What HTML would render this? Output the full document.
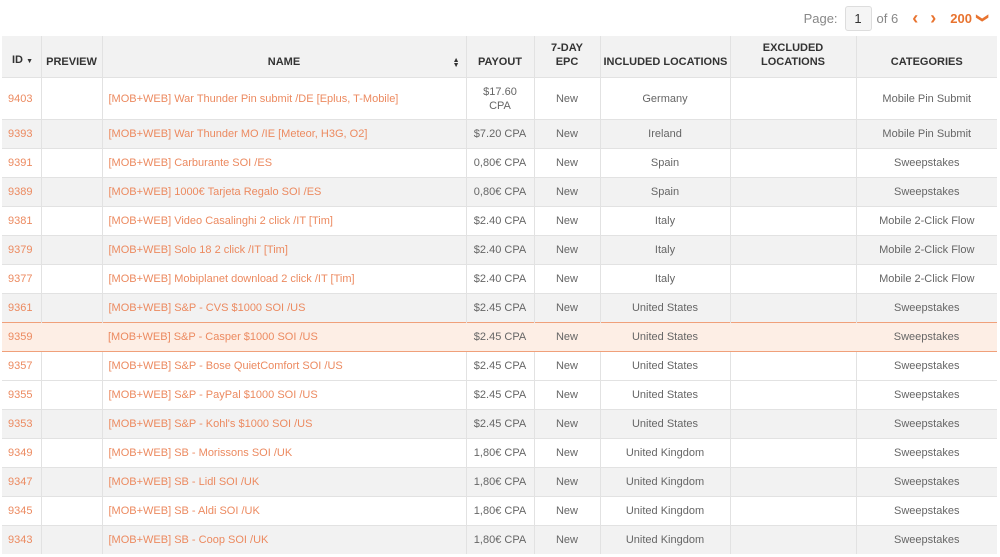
<!DOCTYPE html>
<html><head><meta charset="utf-8"><style>
body{margin:0;background:#fff;font-family:"Liberation Sans",sans-serif;width:1000px;height:557px;overflow:hidden;position:relative}
.top{position:absolute;top:6px;right:12px;height:24px;font-size:13px;color:#888;display:flex;align-items:center}
.pg{display:inline-block;width:27px;height:25px;border:1px solid #ddd;border-radius:3px;background:#f5f5f5;color:#333;text-align:center;line-height:24px;margin:0 5px 0 7px;box-sizing:border-box}
.or{color:#e8732f;font-weight:bold}
table{position:absolute;left:2px;top:36px;border-collapse:collapse;table-layout:fixed;width:995px}
th{background:#f2f2f2;height:33px;font-size:11px;color:#333;font-weight:bold;border-left:1px solid #e2e2e2;text-align:center;vertical-align:bottom;padding:0 3px 8px;line-height:14px;white-space:nowrap}
td{height:28px;font-size:11px;color:#666;border-left:1px solid #e2e2e2;border-top:1px solid #e2e2e2;text-align:center;padding:0 6px;white-space:nowrap;overflow:hidden}
th:first-child,td:first-child{border-left:none}
td.l{text-align:left;color:#ec8a60}
tr.g td{background:#f2f2f2}
tr.h td{background:#fdeee5;border-top:1px solid #f0a07a;border-bottom:1px solid #f0a07a;border-left:none}
tr.first td{height:41px;line-height:14px}
</style></head><body>
<div class="top">Page:<span class="pg">1</span>of 6 <span class="or" style="margin-left:14px;font-size:18px">&#8249;</span><span class="or" style="margin-left:12px;font-size:18px">&#8250;</span><span class="or" style="margin-left:14px">200</span><span class="or" style="margin-left:6px;display:inline-block;transform:rotate(90deg);font-size:12px">&#10095;</span></div>
<table>
<colgroup><col style="width:39px"><col style="width:61px"><col style="width:364px"><col style="width:68px"><col style="width:66px"><col style="width:130px"><col style="width:126px"><col style="width:141px"></colgroup>
<tr><th style="text-align:left;padding-left:10px">ID <span style="font-size:7px">&#9660;</span></th><th>PREVIEW</th><th style="position:relative">NAME<span style="position:absolute;right:6px;bottom:9px;font-size:7px;line-height:5px">&#9650;<br>&#9660;</span></th><th>PAYOUT</th><th>7-DAY<br>EPC</th><th>INCLUDED LOCATIONS</th><th>EXCLUDED<br>LOCATIONS</th><th>CATEGORIES</th></tr>
<tr class="first"><td class="l">9403</td><td></td><td class="l">[MOB+WEB] War Thunder Pin submit /DE [Eplus, T-Mobile]</td><td>$17.60<br>CPA</td><td>New</td><td>Germany</td><td></td><td>Mobile Pin Submit</td></tr>
<tr class="g"><td class="l">9393</td><td></td><td class="l">[MOB+WEB] War Thunder MO /IE [Meteor, H3G, O2]</td><td>$7.20 CPA</td><td>New</td><td>Ireland</td><td></td><td>Mobile Pin Submit</td></tr>
<tr><td class="l">9391</td><td></td><td class="l">[MOB+WEB] Carburante SOI /ES</td><td>0,80€ CPA</td><td>New</td><td>Spain</td><td></td><td>Sweepstakes</td></tr>
<tr class="g"><td class="l">9389</td><td></td><td class="l">[MOB+WEB] 1000€ Tarjeta Regalo SOI /ES</td><td>0,80€ CPA</td><td>New</td><td>Spain</td><td></td><td>Sweepstakes</td></tr>
<tr><td class="l">9381</td><td></td><td class="l">[MOB+WEB] Video Casalinghi 2 click /IT [Tim]</td><td>$2.40 CPA</td><td>New</td><td>Italy</td><td></td><td>Mobile 2-Click Flow</td></tr>
<tr class="g"><td class="l">9379</td><td></td><td class="l">[MOB+WEB] Solo 18 2 click /IT [Tim]</td><td>$2.40 CPA</td><td>New</td><td>Italy</td><td></td><td>Mobile 2-Click Flow</td></tr>
<tr><td class="l">9377</td><td></td><td class="l">[MOB+WEB] Mobiplanet download 2 click /IT [Tim]</td><td>$2.40 CPA</td><td>New</td><td>Italy</td><td></td><td>Mobile 2-Click Flow</td></tr>
<tr class="g"><td class="l">9361</td><td></td><td class="l">[MOB+WEB] S&amp;P - CVS $1000 SOI /US</td><td>$2.45 CPA</td><td>New</td><td>United States</td><td></td><td>Sweepstakes</td></tr>
<tr class="h"><td class="l">9359</td><td></td><td class="l">[MOB+WEB] S&amp;P - Casper $1000 SOI /US</td><td>$2.45 CPA</td><td>New</td><td>United States</td><td></td><td>Sweepstakes</td></tr>
<tr><td class="l">9357</td><td></td><td class="l">[MOB+WEB] S&amp;P - Bose QuietComfort SOI /US</td><td>$2.45 CPA</td><td>New</td><td>United States</td><td></td><td>Sweepstakes</td></tr>
<tr><td class="l">9355</td><td></td><td class="l">[MOB+WEB] S&amp;P - PayPal $1000 SOI /US</td><td>$2.45 CPA</td><td>New</td><td>United States</td><td></td><td>Sweepstakes</td></tr>
<tr class="g"><td class="l">9353</td><td></td><td class="l">[MOB+WEB] S&amp;P - Kohl's $1000 SOI /US</td><td>$2.45 CPA</td><td>New</td><td>United States</td><td></td><td>Sweepstakes</td></tr>
<tr><td class="l">9349</td><td></td><td class="l">[MOB+WEB] SB - Morissons SOI /UK</td><td>1,80€ CPA</td><td>New</td><td>United Kingdom</td><td></td><td>Sweepstakes</td></tr>
<tr class="g"><td class="l">9347</td><td></td><td class="l">[MOB+WEB] SB - Lidl SOI /UK</td><td>1,80€ CPA</td><td>New</td><td>United Kingdom</td><td></td><td>Sweepstakes</td></tr>
<tr><td class="l">9345</td><td></td><td class="l">[MOB+WEB] SB - Aldi SOI /UK</td><td>1,80€ CPA</td><td>New</td><td>United Kingdom</td><td></td><td>Sweepstakes</td></tr>
<tr class="g"><td class="l">9343</td><td></td><td class="l">[MOB+WEB] SB - Coop SOI /UK</td><td>1,80€ CPA</td><td>New</td><td>United Kingdom</td><td></td><td>Sweepstakes</td></tr>
</table>
</body></html>
